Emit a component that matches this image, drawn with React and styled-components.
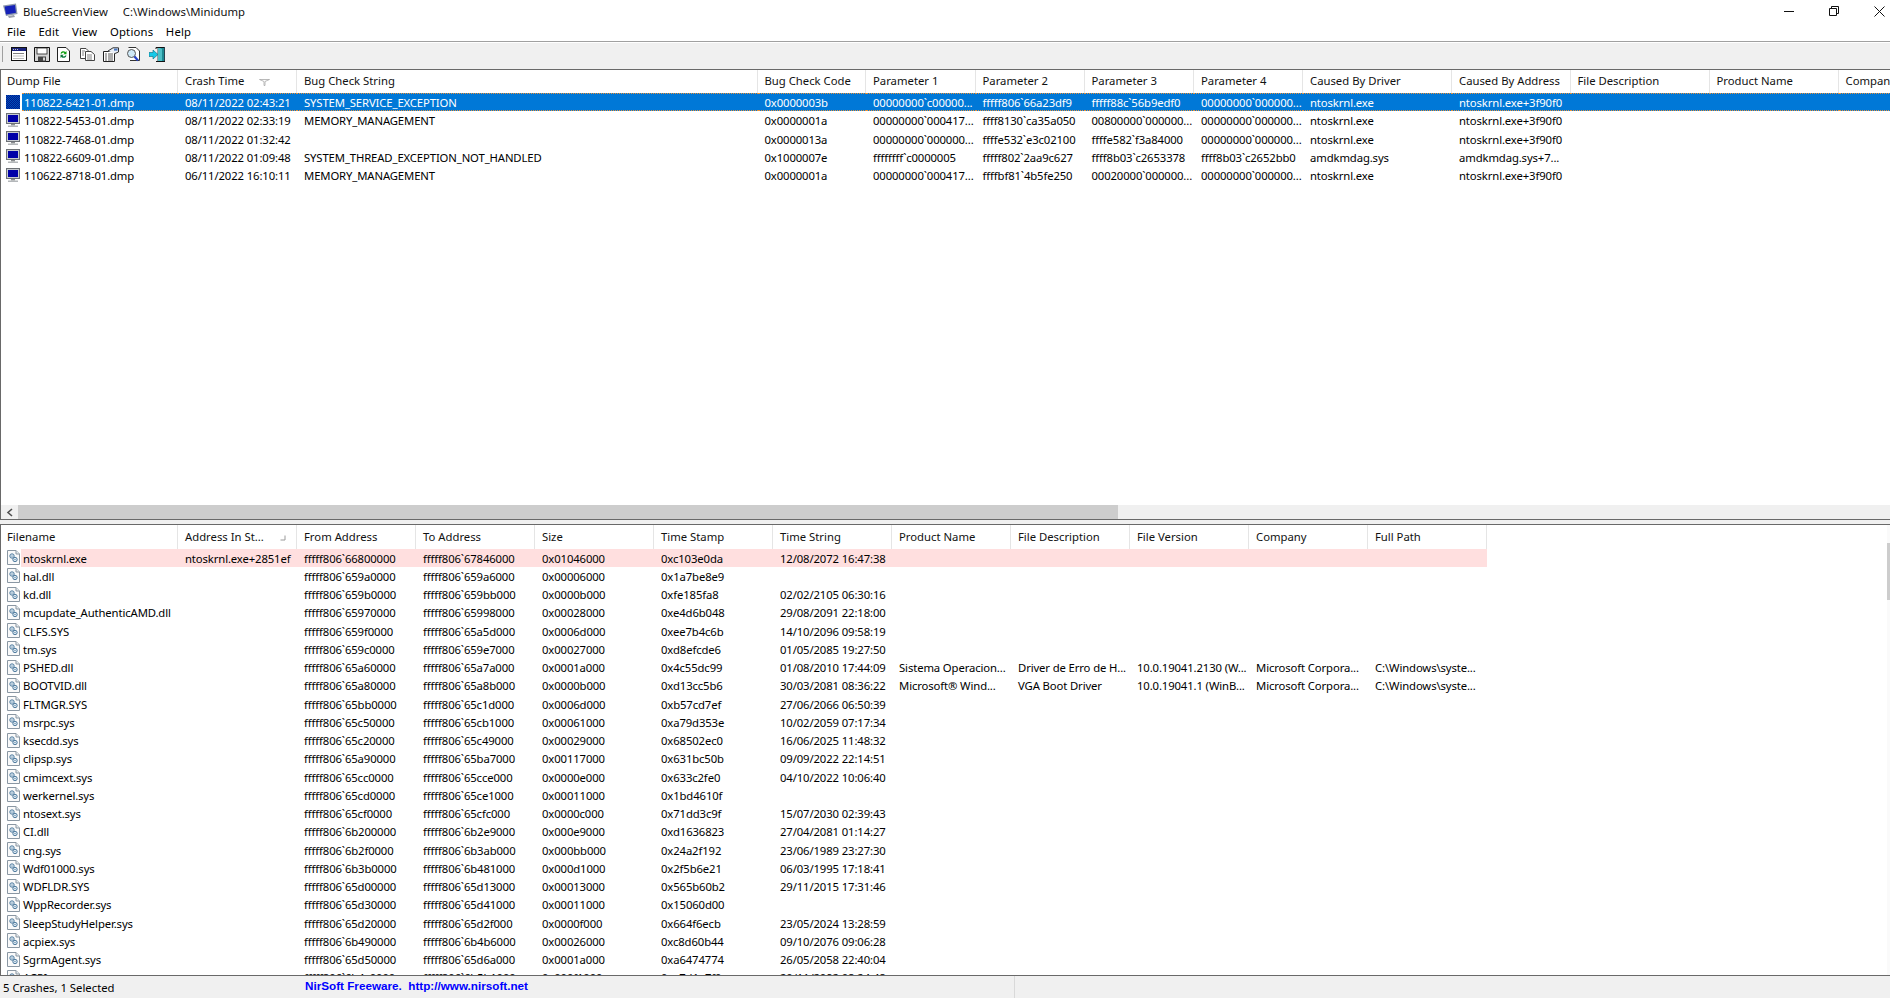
import React from "react";
import styled, { createGlobalStyle } from "styled-components";

const Global = createGlobalStyle`
  html, body { margin: 0; padding: 0; background: #fff; }
  body { font-family: "Noto Sans", "Open Sans", sans-serif; font-size: 11.3px; color: #000; }
`;

const Window = styled.div`
  width: 1890px; height: 998px; display: flex; flex-direction: column; overflow: hidden; background: #fff;
`;
const TitleBar = styled.div`
  height: 22px; flex: none; display: flex; align-items: center; padding-left: 3px; position: relative;
`;
const TitleText = styled.span`
  font-size: 11.3px; letter-spacing: 0.05px; margin-left: ${p => p.$ml}px; color: #111; white-space: nowrap;
`;
const Controls = styled.div`
  margin-left: auto; display: flex; align-items: center; height: 100%; padding-right: 5px; gap: 34px;
`;
const MenuBar = styled.div`
  height: 19px; flex: none; display: flex; align-items: center; border-bottom: 1px solid #a0a0a0; padding-left: 7px; gap: 12.5px;
  box-sizing: content-box;
`;
const MenuItem = styled.span` font-size: 11.3px; letter-spacing: 0.2px; color: #000; `;
const Toolbar = styled.div`
  flex: none; background: #f0f0f0; border-top: 1px solid #fff; border-bottom: 1px solid #696969; box-sizing: border-box;
  display: flex; align-items: center; padding: 0 0 4px 2px; height: 28px;
`;
const ToolSep = styled.div` width: 1px; height: 16px; background: #a0a0a0; margin-right: 8px; `;
const ToolButton = styled.div` width: 23px; height: 16px; display: flex; justify-content: flex-start; align-items: center; `;

const TopList = styled.div` height: 435px; flex: none; border-left: 1px solid #696969; overflow: hidden; box-sizing: border-box; `;
const HBar = styled.div`
  height: 14px; flex: none; background: #f0f0f0; display: flex; border-left: 1px solid #696969;
`;
const HArrow = styled.div` width: 17px; display: flex; align-items: center; justify-content: center; `;
const HThumb = styled.div` width: 1100px; background: #cdcdcd; `;
const Split = styled.div`
  height: 6px; flex: none; box-sizing: border-box; background: #f0f0f0; border-top: 1px solid #696969; border-bottom: 1px solid #696969;
`;
const BottomWrap = styled.div`
  height: 450px; flex: none; display: flex; border-left: 1px solid #696969; overflow: hidden; position: relative;
`;
const BottomList = styled.div` flex: 1; overflow: hidden; min-width: 0; `;
const VBar = styled.div`
  width: 3px; flex: none; background: #fafafa; padding-top: 18px; box-sizing: border-box;
`;
const VThumb = styled.div` height: 57px; background: #cdcdcd; `;

const HeadRow = styled.div`
  display: grid; grid-template-columns: ${p => p.$cols}; height: ${p => p.$h}px;
`;
const HeadCell = styled.div`
  position: relative; display: flex; align-items: center; padding-left: ${p => (p.$first ? 6 : 7)}px; border-right: 1px solid #e5e5e5;
  font-size: 11.3px; color: #111; white-space: nowrap; overflow: hidden; box-sizing: border-box; padding-bottom: ${p => p.$pb}px;
`;
const SortMark = styled.svg` position: absolute; `;
const Row = styled.div`
  display: grid; grid-template-columns: ${p => p.$cols}; height: 18.25px; align-items: center; position: relative;
`;
const Cell = styled.div`
  padding-left: 7px; font-size: 11.3px; letter-spacing: -0.12px; white-space: nowrap; overflow: hidden; box-sizing: border-box; height: 18.25px;
  color: ${p => (p.$sel ? "#fff" : "#000")};
  background: ${p => (p.$sel ? "#0078d7" : p.$pink ? "#ffdfdf" : "transparent")};
  border-top: ${p => (p.$sel ? "1px dotted #e8913a" : "0")};
  border-bottom: ${p => (p.$sel ? "1px dotted #e8913a" : "0")};
  line-height: ${p => (p.$sel ? "17px" : "19px")};
`;
const FirstCell = styled.div`
  display: flex; align-items: center; height: 18.25px; overflow: hidden; padding-left: ${p => p.$pl}px;
`;
const IconBox = styled.div` width: ${p => p.$w}px; flex: none; display: flex; align-items: center; `;
const FirstText = styled.div`
  flex: 1; min-width: 0; height: 100%; box-sizing: border-box; padding-left: 2px; white-space: nowrap; overflow: hidden; font-size: 11.3px; letter-spacing: -0.12px;
  color: ${p => (p.$sel ? "#fff" : "#000")};
  background: ${p => (p.$sel ? "#0078d7" : p.$pink ? "#ffdfdf" : "transparent")};
  border-top: ${p => (p.$sel ? "1px dotted #e8913a" : "0")};
  border-bottom: ${p => (p.$sel ? "1px dotted #e8913a" : "0")};
  line-height: ${p => (p.$sel ? "17px" : "19px")};
`;
const RowFill = styled.div`
  background: ${p => (p.$sel ? "#0078d7" : "transparent")};
  border-top: ${p => (p.$sel ? "1px dotted #e8913a" : "0")};
  border-bottom: ${p => (p.$sel ? "1px dotted #e8913a" : "0")};
  height: 18.25px; box-sizing: border-box;
`;
const Status = styled.div`
  flex: 1; background: #f0f0f0; border-top: 1px solid #696969; display: flex; align-items: stretch; position: relative; box-sizing: border-box;
`;
const StatusLeft = styled.div` width: 298px; flex: none; padding: 4px 0 0 3px; font-size: 11.3px; white-space: nowrap; `;
const StatusLink = styled.div`
  width: 709px; flex: none; color: #0000ff; font-family: "Liberation Sans", Arial, sans-serif; font-weight: 700; font-size: 11.7px; padding: 3px 0 0 4px; white-space: pre;
  border-right: 1px solid #d9d9d9; box-sizing: content-box;
`;

const Monitor = ({ selected }) => (
  <svg width="15" height="15" viewBox="0 0 15 15">
    <defs>
      <pattern id="dith" width="2" height="2" patternUnits="userSpaceOnUse">
        <rect width="2" height="2" fill="#0050b8" />
        <rect width="1" height="1" fill="#001a90" />
        <rect x="1" y="1" width="1" height="1" fill="#001a90" />
      </pattern>
    </defs>
    {selected ? (
      <rect x="0" y="0" width="14" height="14" fill="url(#dith)" />
    ) : (
      <>
        <rect x="0.5" y="0.5" width="13" height="10" fill="#c8ccd0" stroke="#6d7176" />
        <rect x="2" y="2" width="10" height="7" fill="#0000a8" />
        <rect x="5" y="11" width="4" height="1.5" fill="#8a8d90" />
        <rect x="2" y="12.5" width="10" height="1.5" fill="#b4b7ba" />
      </>
    )}
  </svg>
);

const TitleMonitor = () => (
  <svg width="15" height="16" viewBox="0 0 15 16">
    <path d="M0 2.5 13 0.5 14.5 11 3 13Z" fill="#8d98ad" />
    <path d="M1.6 3.5 12 2 13 9.8 3 11.4Z" fill="#1521b8" />
    <path d="M5 13 11 12 12 14 6 15Z" fill="#9aa0aa" />
  </svg>
);

const ModuleIcon = () => (
  <svg width="13" height="15" viewBox="0 0 13 15">
    <path d="M0.5 0.5H9L12.5 4V14.5H0.5Z" fill="#fafafa" stroke="#8a97a3" />
    <path d="M9 .5V4H12.5" fill="#e7ecef" stroke="#8a97a3" />
    <circle cx="5" cy="6" r="2.2" fill="#dbe7f0" stroke="#3f6f95" strokeWidth=".9" />
    <circle cx="8" cy="9.5" r="2.2" fill="#dbe7f0" stroke="#3f6f95" strokeWidth=".9" />
    <circle cx="5" cy="6" r=".6" fill="#3f6f95" />
    <circle cx="8" cy="9.5" r=".6" fill="#3f6f95" />
  </svg>
);

const IconWin = () => (
  <svg width="16" height="14" viewBox="0 0 16 14">
    <rect x=".5" y=".5" width="15" height="13" fill="#fff" stroke="#111" />
    <rect x="1" y="1" width="14" height="3" fill="#1a237e" />
    <path d="M2 2.5h1M4 2.5h1M6 2.5h1M2 6.5h11M2 9h11M2 11.5h11" stroke="#c0c0c0" />
    <path d="M2 6.5h11" stroke="#808080" />
  </svg>
);
const IconSave = () => (
  <svg width="16" height="15" viewBox="0 0 16 15">
    <path d="M.5.5H15.5V14.5H.5Z" fill="#d4d4d4" stroke="#111" />
    <rect x="3" y="1" width="10" height="6" fill="#fff" stroke="#222" strokeWidth=".8" />
    <rect x="4" y="9.5" width="8" height="5" fill="#444" />
    <rect x="9" y="10.5" width="2" height="3" fill="#d4d4d4" />
  </svg>
);
const IconRefresh = () => (
  <svg width="13" height="15" viewBox="0 0 13 15">
    <path d="M.5.5H9L12.5 4V14.5H.5Z" fill="#fff" stroke="#222" />
    <path d="M3.5 6.5a3 3 0 0 1 5-1.5l1-1v3.2H6.4l1-1a1.8 1.8 0 0 0-3 .6Z" fill="#12a012" />
    <path d="M9.5 8.5a3 3 0 0 1-5 1.5l-1 1V7.8h3.1l-1 1a1.8 1.8 0 0 0 3-.6Z" fill="#0b7a3a" />
  </svg>
);
const IconCopy = () => (
  <svg width="15" height="13" viewBox="0 0 15 13">
    <path d="M.5.5H6L8 2.5V10.5H.5Z" fill="#fff" stroke="#444" />
    <path d="M5.5 3.5H11L14.5 6.5V12.5H5.5Z" fill="#fff" stroke="#444" />
    <path d="M2 3h3M2 5h2M2 7h2M7 7h5M7 9h5M7 11h5" stroke="#666" strokeWidth=".8" />
  </svg>
);
const IconProps = () => (
  <svg width="16" height="15" viewBox="0 0 16 15">
    <path d="M.5 4.5H11.5V14.5H.5Z" fill="#fff" stroke="#222" />
    <path d="M2 7h2M5 7h5M2 9h2M5 9h5M2 11h2M5 11h5M2 13h2M5 13h5" stroke="#333" strokeWidth=".8" />
    <path d="M5 4 10 .8H15.5V5L12 6.5" fill="#e9eef5" stroke="#333" />
    <rect x="11" y="1.6" width="3.5" height="2" fill="#4a78c2" />
  </svg>
);
const IconSearch = () => (
  <svg width="15" height="15" viewBox="0 0 15 15">
    <path d="M2.5.5H10L13.5 4V13.5H4" fill="#fff" stroke="#333" />
    <circle cx="5.5" cy="6.5" r="4" fill="#cfe9f7" stroke="#555" />
    <path d="M8.5 9.5 12 13.5" stroke="#2442c8" strokeWidth="2.2" />
  </svg>
);
const IconExit = () => (
  <svg width="16" height="15" viewBox="0 0 16 15">
    <path d="M9 0H15.5V14.5H9Z" fill="#1e8a93" stroke="#123" strokeWidth=".8" />
    <path d="M9 0 13 2V14.5H9Z" fill="#4ec0c8" />
    <path d="M7 2V0.5H15" fill="none" stroke="#111" />
    <path d="M0 5.5H4V3L9 7.5 4 12V9.5H0Z" fill="#16c9e8" stroke="#0a6a80" strokeWidth=".6" />
    <path d="M7 14.5H16" stroke="#111" />
  </svg>
);

const topCols = "177px 119px 460.5px 108.5px 109.5px 109px 109.5px 109px 149px 118.5px 139px 129px 60px";
const bottomCols = "177px " + Array(11).fill("119px").join(" ");

const topHeads = ["Dump File", "Crash Time", "Bug Check String", "Bug Check Code", "Parameter 1", "Parameter 2", "Parameter 3", "Parameter 4", "Caused By Driver", "Caused By Address", "File Description", "Product Name", "Company"];
const bottomHeads = ["Filename", "Address In St...", "From Address", "To Address", "Size", "Time Stamp", "Time String", "Product Name", "File Description", "File Version", "Company", "Full Path"];

const crashes = [
  ["110822-6421-01.dmp", "08/11/2022 02:43:21", "SYSTEM_SERVICE_EXCEPTION", "0x0000003b", "00000000`c00000...", "fffff806`66a23df9", "fffff88c`56b9edf0", "00000000`000000...", "ntoskrnl.exe", "ntoskrnl.exe+3f90f0"],
  ["110822-5453-01.dmp", "08/11/2022 02:33:19", "MEMORY_MANAGEMENT", "0x0000001a", "00000000`000417...", "ffff8130`ca35a050", "00800000`000000...", "00000000`000000...", "ntoskrnl.exe", "ntoskrnl.exe+3f90f0"],
  ["110822-7468-01.dmp", "08/11/2022 01:32:42", "", "0x0000013a", "00000000`000000...", "ffffe532`e3c02100", "ffffe582`f3a84000", "00000000`000000...", "ntoskrnl.exe", "ntoskrnl.exe+3f90f0"],
  ["110822-6609-01.dmp", "08/11/2022 01:09:48", "SYSTEM_THREAD_EXCEPTION_NOT_HANDLED", "0x1000007e", "ffffffff`c0000005", "fffff802`2aa9c627", "ffff8b03`c2653378", "ffff8b03`c2652bb0", "amdkmdag.sys", "amdkmdag.sys+7..."],
  ["110622-8718-01.dmp", "06/11/2022 16:10:11", "MEMORY_MANAGEMENT", "0x0000001a", "00000000`000417...", "ffffbf81`4b5fe250", "00020000`000000...", "00000000`000000...", "ntoskrnl.exe", "ntoskrnl.exe+3f90f0"],
];

const mod = (name, from, to, size, stamp, time, ...rest) => [
  name, "", "fffff806`" + from, "fffff806`" + to, size, stamp, time, ...rest,
];
const modules = [
  ["ntoskrnl.exe", "ntoskrnl.exe+2851ef", "fffff806`66800000", "fffff806`67846000", "0x01046000", "0xc103e0da", "12/08/2072 16:47:38"],
  mod("hal.dll", "659a0000", "659a6000", "0x00006000", "0x1a7be8e9", ""),
  mod("kd.dll", "659b0000", "659bb000", "0x0000b000", "0xfe185fa8", "02/02/2105 06:30:16"),
  mod("mcupdate_AuthenticAMD.dll", "65970000", "65998000", "0x00028000", "0xe4d6b048", "29/08/2091 22:18:00"),
  mod("CLFS.SYS", "659f0000", "65a5d000", "0x0006d000", "0xee7b4c6b", "14/10/2096 09:58:19"),
  mod("tm.sys", "659c0000", "659e7000", "0x00027000", "0xd8efcde6", "01/05/2085 19:27:50"),
  mod("PSHED.dll", "65a60000", "65a7a000", "0x0001a000", "0x4c55dc99", "01/08/2010 17:44:09", "Sistema Operacion...", "Driver de Erro de H...", "10.0.19041.2130 (W...", "Microsoft Corpora...", "C:\\Windows\\syste..."),
  mod("BOOTVID.dll", "65a80000", "65a8b000", "0x0000b000", "0xd13cc5b6", "30/03/2081 08:36:22", "Microsoft® Wind...", "VGA Boot Driver", "10.0.19041.1 (WinB...", "Microsoft Corpora...", "C:\\Windows\\syste..."),
  mod("FLTMGR.SYS", "65bb0000", "65c1d000", "0x0006d000", "0xb57cd7ef", "27/06/2066 06:50:39"),
  mod("msrpc.sys", "65c50000", "65cb1000", "0x00061000", "0xa79d353e", "10/02/2059 07:17:34"),
  mod("ksecdd.sys", "65c20000", "65c49000", "0x00029000", "0x68502ec0", "16/06/2025 11:48:32"),
  mod("clipsp.sys", "65a90000", "65ba7000", "0x00117000", "0x631bc50b", "09/09/2022 22:14:51"),
  mod("cmimcext.sys", "65cc0000", "65cce000", "0x0000e000", "0x633c2fe0", "04/10/2022 10:06:40"),
  mod("werkernel.sys", "65cd0000", "65ce1000", "0x00011000", "0x1bd4610f", ""),
  mod("ntosext.sys", "65cf0000", "65cfc000", "0x0000c000", "0x71dd3c9f", "15/07/2030 02:39:43"),
  mod("CI.dll", "6b200000", "6b2e9000", "0x000e9000", "0xd1636823", "27/04/2081 01:14:27"),
  mod("cng.sys", "6b2f0000", "6b3ab000", "0x000bb000", "0x24a2f192", "23/06/1989 23:27:30"),
  mod("Wdf01000.sys", "6b3b0000", "6b481000", "0x000d1000", "0x2f5b6e21", "06/03/1995 17:18:41"),
  mod("WDFLDR.SYS", "65d00000", "65d13000", "0x00013000", "0x565b60b2", "29/11/2015 17:31:46"),
  mod("WppRecorder.sys", "65d30000", "65d41000", "0x00011000", "0x15060d00", ""),
  mod("SleepStudyHelper.sys", "65d20000", "65d2f000", "0x0000f000", "0x664f6ecb", "23/05/2024 13:28:59"),
  mod("acpiex.sys", "6b490000", "6b4b6000", "0x00026000", "0xc8d60b44", "09/10/2076 09:06:28"),
  mod("SgrmAgent.sys", "65d50000", "65d6a000", "0x0001a000", "0xa6474774", "26/05/2058 22:40:04"),
  mod("ACPI.sys", "6b4c0000", "6b5b1000", "0x000f1000", "0xe7d1a7f0", "20/11/2092 08:24:48"),
];

export default function App() {
  return (
    <Window>
      <Global />
      <TitleBar>
        <TitleMonitor />
        <TitleText $ml={5}>BlueScreenView</TitleText>
        <TitleText $ml={15}>C:\Windows\Minidump</TitleText>
        <Controls>
          <svg width="11" height="11" viewBox="0 0 11 11"><path d="M0 5.5H10" stroke="#111" /></svg>
          <svg width="11" height="11" viewBox="0 0 11 11"><path d="M.5 2.5H7.5V9.5H.5ZM2.5 2.5V.5H9.5V7.5H7.5" fill="none" stroke="#111" /></svg>
          <svg width="11" height="11" viewBox="0 0 11 11"><path d="M.5.5 10.5 10.5M10.5.5 .5 10.5" stroke="#111" /></svg>
        </Controls>
      </TitleBar>
      <MenuBar>
        {["File", "Edit", "View", "Options", "Help"].map(m => <MenuItem key={m}>{m}</MenuItem>)}
      </MenuBar>
      <Toolbar>
        <ToolSep />
        <ToolButton><IconWin /></ToolButton>
        <ToolButton><IconSave /></ToolButton>
        <ToolButton><IconRefresh /></ToolButton>
        <ToolButton><IconCopy /></ToolButton>
        <ToolButton><IconProps /></ToolButton>
        <ToolButton><IconSearch /></ToolButton>
        <ToolButton><IconExit /></ToolButton>
      </Toolbar>
      <TopList>
        <HeadRow $cols={topCols} $h={23}>
          {topHeads.map((h, i) => (
            <HeadCell key={h} $first={i === 0} $pb={2}>
              {h}
              {h === "Crash Time" && (
                <SortMark width="11" height="7" viewBox="0 0 11 7" style={{ left: 81, top: 9 }}>
                  <path d="M.5.5H10.5L6 2.5V6.5H5V2.5Z" fill="none" stroke="#a8a8a8" strokeWidth=".8" />
                </SortMark>
              )}
            </HeadCell>
          ))}
        </HeadRow>
        {crashes.map((r, i) => (
          <Row key={r[0]} $cols={topCols + " 1fr"}>
            <FirstCell $pl={5}>
              <IconBox $w={16}><Monitor selected={i === 0} /></IconBox>
              <FirstText $sel={i === 0}>{r[0]}</FirstText>
            </FirstCell>
            {r.slice(1).map((c, j) => <Cell key={j} $sel={i === 0}>{c}</Cell>)}
            {[0, 1, 2, 3].map(k => <RowFill key={k} $sel={i === 0} />)}
          </Row>
        ))}
      </TopList>
      <HBar>
        <HArrow>
          <svg width="8" height="9" viewBox="0 0 8 9"><path d="M6 1 2 4.5 6 8" fill="none" stroke="#505050" strokeWidth="1.6" /></svg>
        </HArrow>
        <HThumb />
      </HBar>
      <Split />
      <BottomWrap>
        <BottomList>
          <HeadRow $cols={bottomCols} $h={23.5}>
            {bottomHeads.map((h, i) => (
              <HeadCell key={h} $first={i === 0} $pb={0}>
                {h}
                {h === "Address In St..." && (
                  <SortMark width="6" height="6" viewBox="0 0 6 6" style={{ left: 102, top: 10 }}>
                    <path d="M5 .5V5H.5" fill="none" stroke="#9a9a9a" />
                  </SortMark>
                )}
              </HeadCell>
            ))}
          </HeadRow>
          {modules.map((r, i) => (
            <Row key={r[0]} $cols={bottomCols}>
              <FirstCell $pl={6}>
                <IconBox $w={14}><ModuleIcon /></IconBox>
                <FirstText $pink={i === 0}>{r[0]}</FirstText>
              </FirstCell>
              {Array.from({ length: 11 }, (_, j) => <Cell key={j} $pink={i === 0}>{r[j + 1] || ""}</Cell>)}
            </Row>
          ))}
        </BottomList>
        <VBar><VThumb /></VBar>
      </BottomWrap>
      <Status>
        <StatusLeft>5 Crashes, 1 Selected</StatusLeft>
        <StatusLink>{"NirSoft Freeware.  http://www.nirsoft.net"}</StatusLink>
      </Status>
    </Window>
  );
}
